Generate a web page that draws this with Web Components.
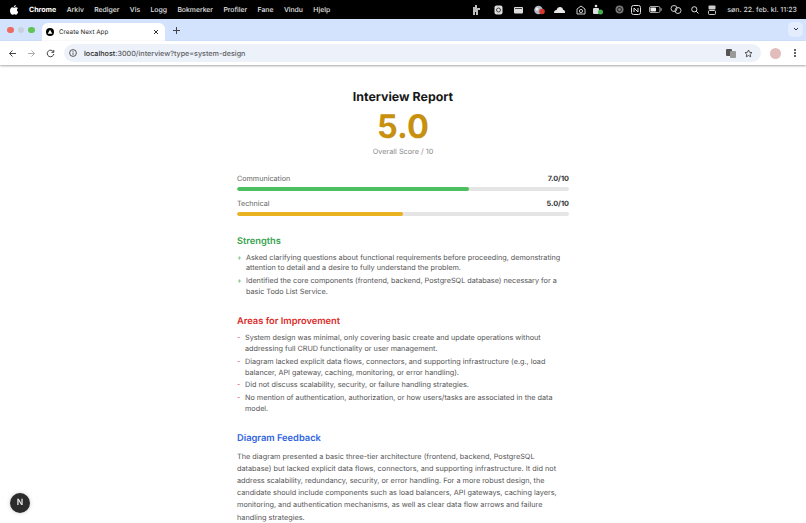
<!DOCTYPE html>
<html lang="nb">
<head>
<meta charset="utf-8">
<title>Create Next App</title>
<style>
    html, body {
        margin: 0;
        height: 523px;
        overflow: hidden;
        background: #fff;
        font-family: Inter, "Liberation Sans", sans-serif;
        text-rendering: geometricPrecision;
    }
    score-bar:last-of-type { margin-bottom: 18.5px; }
</style>
</head>
<body>
<mac-menubar></mac-menubar>
<browser-tabs></browser-tabs>
<browser-toolbar></browser-toolbar>
<report-page>
    <score-bar label="Communication" value="7" color="#4cc05f"></score-bar>
    <score-bar label="Technical" value="5" color="#eab221"></score-bar>
    <report-section heading="Strengths" color="#38a34f" mark="+" indent="9">
        <li>Asked clarifying questions about functional requirements before proceeding, demonstrating attention to detail and a desire to fully understand the problem.</li>
        <li>Identified the core components (frontend, backend, PostgreSQL database) necessary for a basic Todo List Service.</li>
    </report-section>
    <report-section heading="Areas for Improvement" color="#dc2a2a" mark="-" indent="8">
        <li>System design was minimal, only covering basic create and update operations without addressing full CRUD functionality or user management.</li>
        <li>Diagram lacked explicit data flows, connectors, and supporting infrastructure (e.g., load balancer, API gateway, caching, monitoring, or error handling).</li>
        <li>Did not discuss scalability, security, or failure handling strategies.</li>
        <li>No mention of authentication, authorization, or how users/tasks are associated in the data model.</li>
    </report-section>
    <report-section heading="Diagram Feedback" color="#2f63e0">
        The diagram presented a basic three-tier architecture (frontend, backend, PostgreSQL database) but lacked explicit data flows, connectors, and supporting infrastructure. It did not address scalability, redundancy, security, or error handling. For a more robust design, the candidate should include components such as load balancers, API gateways, caching layers, monitoring, and authentication mechanisms, as well as clear data flow arrows and failure handling strategies.
    </report-section>
</report-page>
<dev-badge></dev-badge>

<script>
const makeElement = (name, html) => {
    customElements.define(name, class extends HTMLElement {
        constructor() {
            super();
            this.attachShadow({ mode: 'open' });
            this.shadowRoot.innerHTML = html;
        }
    });
};

makeElement('mac-menubar', `
<style>
    :host {
        display: flex;
        align-items: center;
        height: 19px;
        padding: 0 9px 0 10px;
        background: #000;
        color: #e4e4e4;
        font: 500 6.850px Inter, "Liberation Sans", sans-serif;
    }
    .left { display: flex; align-items: center; gap: 10.400px; }
    .left b { color: #fff; font-weight: 700; font-size: 7.100px; }
    .apple { width: 8px; height: 10px; fill: #fff; margin-right: .5px; }
    .right { margin-left: auto; display: flex; align-items: center; }
    .right svg { display: block; }
    .clock { font-size: 7px; margin-left: 11px; color: #d8d8d8; }
</style>
<div class="left">
    <svg class="apple" viewBox="0 0 16 20"><path d="M11.6 0c.2 1.9-1.9 4.4-4 4.200C7.300 2.300 9.500.2 11.600 0zM8 5.500c1 0 2.300-1.100 4.200-1.100 1.600 0 3 .8 3.700 2-3.200 1.900-2.600 6.200.6 7.500-.8 2.200-2.600 5.600-4.500 5.600-1.200 0-1.900-.8-3.400-.8s-2.300.8-3.400.8C2.300 19.500 0 15 0 11.300 0 7.200 2.500 4.600 5 4.600c1.300 0 2.200.9 3 .9z"/></svg>
    <b>Chrome</b><span>Arkiv</span><span>Rediger</span><span>Vis</span><span>Logg</span><span>Bokmerker</span><span>Profiler</span><span>Fane</span><span>Vindu</span><span>Hjelp</span>
</div>
<div class="right">
    <svg width="9" height="10" viewBox="0 0 9 10" fill="#bdbdbd"><path d="M1 2h2V0h2v3h3v2H6v5H4V7H3v3H1z"/></svg>
    <svg style="margin-left:13px" width="9" height="10" viewBox="0 0 9 10"><rect x=".5" y=".5" width="8" height="9" rx="2" fill="#ddd"/><circle cx="4.500" cy="5" r="2" fill="none" stroke="#444" stroke-width="1"/></svg>
    <svg style="margin-left:11px" width="9" height="8" viewBox="0 0 9 8"><rect y="1" width="9" height="6.500" rx="1" fill="#ddd"/><rect x="1" y="2" width="7" height="1" fill="#444"/></svg>
    <svg style="margin-left:11px" width="11" height="10" viewBox="0 0 11 10"><circle cx="4.500" cy="5" r="4.300" fill="#aeb8c4"/><circle cx="3" cy="4" r="1.500" fill="#eee"/><circle cx="8" cy="6.500" r="2.800" fill="#d8392f"/></svg>
    <svg style="margin-left:9px" width="11" height="8" viewBox="0 0 11 8" fill="#e8e8e8"><path d="M0 7c0-2 1-3 2.500-3C3 2 4.500 1 6 1c2 0 3 1.500 3 2.800 1.200.3 2 1.200 2 2.200v1z"/></svg>
    <svg style="margin-left:11.500px" width="10" height="10" viewBox="0 0 10 10" fill="none" stroke="#ccc"><path d="M1 4l4-3 4 3v5H1z"/><circle cx="5" cy="6" r="1.600"/></svg>
    <svg style="margin-left:7px" width="10" height="11" viewBox="0 0 10 11"><rect x="0" y="4" width="6" height="6" rx="1" fill="#ddd"/><circle cx="3" cy="2" r="1.300" fill="#ddd"/><circle cx="7.500" cy="8" r="2.500" fill="#3fb24f"/></svg>
    <svg style="margin-left:11.500px" width="9" height="9" viewBox="0 0 9 9"><circle cx="4.500" cy="4.500" r="4" fill="#777"/><circle cx="4.500" cy="4.500" r="2" fill="none" stroke="#222"/></svg>
    <svg style="margin-left:7.500px" width="10" height="10" viewBox="0 0 10 10" fill="none" stroke="#ddd"><rect x=".5" y=".5" width="9" height="9" rx="2"/><path d="M3 7V3l4 4V3"/></svg>
    <svg style="margin-left:7.500px" width="13" height="7" viewBox="0 0 13 7"><rect x=".5" y=".5" width="10.500" height="6" rx="1.500" fill="none" stroke="#aaa"/><rect x="1.500" y="1.500" width="5.500" height="4" rx=".7" fill="#eee"/><rect x="11.700" y="2.300" width="1" height="2.400" fill="#aaa"/></svg>
    <svg style="margin-left:8.500px" width="12" height="9" viewBox="0 0 12 9" fill="none" stroke="#ccc"><circle cx="4" cy="3.500" r="3"/><circle cx="8" cy="5.500" r="3"/></svg>
    <svg style="margin-left:9px" width="8" height="8" viewBox="0 0 8 8" fill="none" stroke="#ddd" stroke-width="1"><circle cx="3.300" cy="3.300" r="2.600"/><path d="M5.200 5.200L7.500 7.500"/></svg>
    <svg style="margin-left:9px" width="8" height="10" viewBox="0 0 8 10"><rect x=".5" y=".5" width="7" height="4" rx="1" fill="#ccc"/><rect x=".5" y="5.500" width="7" height="4" rx="1" fill="none" stroke="#ccc"/></svg>
    <span class="clock">søn. 22. feb. kl. 11:23</span>
</div>
`);

makeElement('browser-tabs', `
<style>
    :host {
        display: flex;
        align-items: flex-end;
        height: 22px;
        background: #d3e3fd;
        color: #2a2a2a;
        font: 400 6.300px Inter, "Liberation Sans", sans-serif;
    }
    .lights { display: flex; gap: 4px; align-self: center; padding: 0 0 0 7px; }
    .lights i { width: 6.500px; height: 6.500px; border-radius: 50%; }
    .tab {
        display: flex;
        align-items: center;
        width: 123px;
        height: 18px;
        margin-left: 7.500px;
        padding: 0 6px 0 4px;
        box-sizing: border-box;
        background: #fff;
        border-radius: 6px 6px 0 0;
    }
    .favicon {
        width: 8px; height: 8px; margin-right: 5px;
        border-radius: 50%;
        background: #000;
    }
    .favicon svg { display: block; }
    .tab span { flex: 1; }
    .plus { align-self: center; margin-left: 6.500px; width: 9px; height: 9px; }
    .chevron {
        margin: 0 3px 2px auto;
        align-self: center;
        width: 15px; height: 15px;
        border-radius: 5px;
        background: #e4edfd;
        display: flex; align-items: center; justify-content: center;
    }
</style>
<div class="lights"><i style="background:#ed6a5e"></i><i style="background:#c9d0db"></i><i style="background:#61c454"></i></div>
<div class="tab">
    <div class="favicon"><svg width="8" height="8" viewBox="0 0 8 8"><path d="M4 1.800L6.300 5.800H1.700z" fill="#fff"/></svg></div>
    <span>Create Next App</span>
    <svg width="6" height="6" viewBox="0 0 6 6" stroke="#333" stroke-width="1"><path d="M1 1l4 4M5 1L1 5"/></svg>
</div>
<svg class="plus" viewBox="0 0 9 9" stroke="#444" stroke-width="1"><path d="M4.500 1v7M1 4.500h7"/></svg>
<div class="chevron"><svg width="6" height="4" viewBox="0 0 6 4" fill="none" stroke="#333" stroke-width="1"><path d="M1 1l2 2 2-2"/></svg></div>
`);

makeElement('browser-toolbar', `
<style>
    :host {
        display: flex;
        align-items: center;
        height: 24px;
        padding: 0 8px 0 8px;
        background: #fff;
        box-shadow: 0 1px 2px rgba(0,0,0,.35);
        position: relative;
        font: 500 7.200px Inter, "Liberation Sans", sans-serif;
    }
    .nav { display: flex; align-items: center; gap: 10px; }
    .omnibox {
        flex: 1;
        height: 18px;
        margin: 0 9px 0 9px;
        padding: 0 8px 0 5px;
        display: flex;
        align-items: center;
        gap: 7px;
        background: #edf2fa;
        border-radius: 9px;
        color: #5d6064;
    }
    .omnibox b { color: #1f1f1f; font-weight: 500; }
    .omnibox .url { flex: 1; }
    .avatar { width: 11px; height: 11px; border-radius: 50%; background: #e3bcbc; margin-right: 13px; }
    .dots { display: flex; flex-direction: column; gap: 1.500px; margin-right: 2px; }
    .dots i { width: 1.600px; height: 1.600px; border-radius: 50%; background: #444; }
</style>
<div class="nav">
    <svg width="9" height="9" viewBox="0 0 9 9" fill="none" stroke="#444" stroke-width="1"><path d="M8 4.500H1.500M4.500 1.500l-3 3 3 3"/></svg>
    <svg width="9" height="9" viewBox="0 0 9 9" fill="none" stroke="#aaa" stroke-width="1"><path d="M1 4.500h6.500M4.500 1.500l3 3-3 3"/></svg>
    <svg width="9" height="9" viewBox="0 0 9 9" fill="none" stroke="#444" stroke-width="1"><path d="M7.500 3A3.300 3.300 0 1 0 7.800 5"/><path d="M7.800 1v2.400H5.400" /></svg>
</div>
<div class="omnibox">
    <svg width="8" height="8" viewBox="0 0 8 8" fill="none" stroke="#444" stroke-width=".9"><circle cx="4" cy="4" r="3.400"/><path d="M4 3.600v2.200M4 2v.9"/></svg>
    <span class="url"><b>localhost</b>:3000/interview?type=system-design</span>
    <svg width="10" height="9" viewBox="0 0 10 9" style="margin-right:1px"><rect width="6" height="7" rx="1" fill="#555"/><rect x="4" y="2" width="6" height="7" rx="1" fill="#999"/></svg>
    <svg width="9" height="9" viewBox="0 0 9 9" fill="none" stroke="#444" stroke-width=".9"><path d="M4.500 1l1.050 2.300 2.450.3-1.800 1.700.5 2.500-2.200-1.250L2.300 7.800l.5-2.500L1 3.600l2.450-.3z"/></svg>
</div>
<div class="avatar"></div>
<div class="dots"><i></i><i></i><i></i></div>
`);

makeElement('report-page', `
<style>
    :host {
        display: block;
        width: 332px;
        margin: 0 auto;
        padding-top: 24px;
        color: #444;
    }
    h1 {
        margin: 0;
        text-align: center;
        font-size: 12.400px;
        line-height: 15px;
        font-weight: 700;
        color: #171717;
    }
    .score {
        margin-top: 3px;
        text-align: center;
        font-size: 32.500px;
        line-height: 39px;
        font-weight: 700;
        color: #c8900f;
    }
    .caption {
        margin-bottom: 15.500px;
        text-align: center;
        font-size: 7.300px;
        line-height: 11px;
        color: #8a8a8a;
    }
</style>
<h1>Interview Report</h1>
<div class="score">5.0</div>
<div class="caption">Overall Score / 10</div>
<slot></slot>
`);

customElements.define('score-bar', class extends HTMLElement {
    constructor() {
        super();
        this.attachShadow({ mode: 'open' });
    }
    connectedCallback() {
        const value = parseFloat(this.getAttribute('value'));
        this.shadowRoot.innerHTML = `
<style>
    :host { display: block; margin-bottom: 7.500px; }
    .row { display: flex; justify-content: space-between; font-size: 7.200px; line-height: 12px; color: #666; }
    .row b { color: #333; font-weight: 700; font-size: 7.300px; }
    .track { margin-top: 2px; height: 4px; border-radius: 2px; background: #e5e5e5; overflow: hidden; }
    .fill { height: 100%; border-radius: 2px; }
</style>
<div class="row"><span>${this.getAttribute('label')}</span><b>${value.toFixed(1)}/10</b></div>
<div class="track"><div class="fill" style="width:${value * 10}%;background:${this.getAttribute('color')}"></div></div>`;
    }
});

customElements.define('report-section', class extends HTMLElement {
    constructor() {
        super();
        this.attachShadow({ mode: 'open' });
    }
    connectedCallback() {
        const mark = this.getAttribute('mark');
        const indent = this.getAttribute('indent') || 0;
        this.shadowRoot.innerHTML = `
<style>
    :host { display: block; margin-top: 17.500px; font-size: ${mark ? 7.250 : 7.300}px; color: #555; }
    h2 { margin: 0 0 ${mark ? 5 : 5.400}px; font-size: 9.300px; line-height: 13px; font-weight: 600; color: ${this.getAttribute('color')}; }
    .body { line-height: ${mark ? 10.800 : 12.200}px; padding-right: ${mark ? 0 : 3}px; }
    ::slotted(li) {
        display: block;
        position: relative;
        padding-left: ${indent}px;
        margin-bottom: 2px;
    }
</style>
<h2>${this.getAttribute('heading')}</h2>
<div class="body"><slot></slot></div>`;
        this.querySelectorAll('li').forEach((li) => {
            const span = document.createElement('list-mark');
            span.textContent = mark;
            span.style.color = this.getAttribute('color');
            li.prepend(span);
        });
    }
});

makeElement('list-mark', `
<style>
    :host { position: absolute; left: 0; top: 0; opacity: .85; }
</style>
<slot></slot>
`);

makeElement('dev-badge', `
<style>
    :host {
        position: fixed;
        left: 10px;
        bottom: 10px;
        width: 20px;
        height: 20px;
        border-radius: 50%;
        background: #2b2b2b;
        color: #eee;
        display: flex;
        align-items: center;
        justify-content: center;
        font: 600 8.500px Inter, "Liberation Sans", sans-serif;
        box-shadow: 0 0 4px rgba(0,0,0,.2);
    }
</style>
N
`);
</script>
</body>
</html>
